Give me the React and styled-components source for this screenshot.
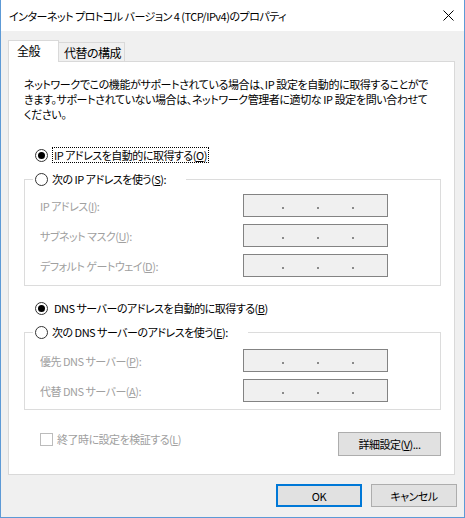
import React from 'react'
import styled, { createGlobalStyle, css } from 'styled-components'

const GlobalStyle = createGlobalStyle`
    html, body {
        margin: 0;
        padding: 0;
        background: #fff;
    }

    body {
        font-family: "Noto Sans CJK JP", "Noto Sans", sans-serif;
        font-size: 11px;
        letter-spacing: -0.5px;
        font-feature-settings: "palt" 1;
        color: #000;
    }

    * {
        box-sizing: border-box;
    }
`

const Window = styled.div`
    display: flex;
    flex-direction: column;
    width: 465px;
    height: 518px;
    border: 1px solid #5d9ad6;
    border-top: 0;
`

const TitleBar = styled.div`
    display: flex;
    align-items: center;
    justify-content: space-between;
    height: 31px;
    padding: 0 10px 0 8px;
    background: #fff;
`

const Title = styled.span`
    line-height: 16px;
`

const Body = styled.div`
    flex: 1;
    display: flex;
    flex-direction: column;
    padding: 9px 7px 10px 7px;
    background: #f0f0f0;
`

const TabList = styled.div`
    display: flex;
    align-items: flex-end;
    height: 21px;
`

const Tab = styled.div`
    display: flex;
    align-items: center;
    font-size: 12px;
    border: 1px solid #d9d9d9;

    ${props => props.$active ? css`
        position: relative;
        z-index: 1;
        width: 51px;
        height: 22px;
        margin-bottom: -1px;
        padding: 0 0 3px 8px;
        border-bottom: 0;
        background: #fff;
    ` : css`
        width: 66px;
        height: 19px;
        padding: 1px 0 0 5px;
        border-left: 0;
        border-bottom: 0;
        background: #f0f0f0;
    `}
`

const Panel = styled.div`
    flex: 1;
    display: flex;
    flex-direction: column;
    margin-right: 2px;
    padding: 15px 13px 0 15px;
    border: 1px solid #d9d9d9;
    background: #fff;
`

const Intro = styled.p`
    margin: 0;
    line-height: 15px;
    letter-spacing: -0.4px;
    white-space: nowrap;
`

const RadioRow = styled.label`
    display: flex;
    align-items: center;
    gap: 4px;
    height: 16px;
    margin: ${props => props.$top || 0}px 0 0 11px;
`

const Radio = styled.span`
    position: relative;
    flex: none;
    width: 13px;
    height: 13px;
    border: 1px solid #333;
    border-radius: 50%;
    background: #fff;

    ${props => props.$checked && css`
        &::after {
            content: '';
            position: absolute;
            top: 2px;
            left: 2px;
            width: 7px;
            height: 7px;
            border-radius: 50%;
            background: #000;
        }
    `}
`

const RadioText = styled.span`
    line-height: 14px;
    padding: 0 1px;
    border: 1px dotted ${props => props.$focused ? '#000' : 'transparent'};
`

const Group = styled.fieldset`
    display: flex;
    flex-direction: column;
    gap: 7px;
    width: 417px;
    min-width: 0;
    margin: 8px 0 0;
    padding: ${props => props.$top}px 0 ${props => props.$bottom}px 8px;
    border: 1px solid #dcdcdc;
`

const Legend = styled.legend`
    display: flex;
    align-items: center;
    gap: 4px;
    height: 16px;
    padding: 0 ${props => props.$tail}px 0 2px;
`

const FieldRow = styled.div`
    display: flex;
    align-items: center;
    height: 23px;
`

const FieldLabel = styled.span`
    width: 203px;
    margin-left: 7px;
    color: #a0a0a0;
`

const IpBox = styled.div`
    display: flex;
    align-items: center;
    gap: 33px;
    width: 145px;
    height: 23px;
    padding: 5px 0 0 38px;
    border: 1px solid #838383;
    background: #f0f0f0;
`

const Dot = styled.span`
    width: 2px;
    height: 2px;
    background: #8a8a8a;
`

const BottomRow = styled.div`
    display: flex;
    align-items: flex-start;
    justify-content: space-between;
    width: 417px;
    margin-top: 22px;
    padding-left: 16px;
`

const CheckLabel = styled.label`
    display: flex;
    align-items: center;
    gap: 4px;
    color: #a0a0a0;
    line-height: 14px;
`

const CheckBox = styled.span`
    width: 13px;
    height: 13px;
    border: 1px solid #bcbcbc;
    background: #fff;
`

const Button = styled.button`
    width: ${props => props.$width}px;
    height: ${props => props.$height}px;
    padding: 0;
    font: inherit;
    letter-spacing: inherit;
    color: #000;
    background: #e1e1e1;
    border: ${props => props.$default ? '2px solid #0078d7' : '1px solid #adadad'};
`

const Footer = styled.div`
    display: flex;
    justify-content: flex-end;
    gap: 9px;
    margin-top: 9px;
`

const IpField = ({ label }) => (
    <FieldRow>
        <FieldLabel>{label}</FieldLabel>
        <IpBox>
            <Dot />
            <Dot />
            <Dot />
        </IpBox>
    </FieldRow>
)

const CloseIcon = () => (
    <svg width="11" height="11" viewBox="0 0 11 11">
        <path d="M0.5 0.5 L10.5 10.5 M10.5 0.5 L0.5 10.5" stroke="#000" strokeWidth="1" fill="none" />
    </svg>
)

const App = () => (
    <>
        <GlobalStyle />
        <Window>
            <TitleBar>
                <Title>インターネット プロトコル バージョン 4 (TCP/IPv4)のプロパティ</Title>
                <CloseIcon />
            </TitleBar>

            <Body>
                <TabList>
                    <Tab $active>全般</Tab>
                    <Tab>代替の構成</Tab>
                </TabList>

                <Panel>
                    <Intro>
                        ネットワークでこの機能がサポートされている場合は、IP 設定を自動的に取得することがで<br />
                        きます。サポートされていない場合は、ネットワーク管理者に適切な IP 設定を問い合わせて<br />
                        ください。
                    </Intro>

                    <RadioRow $top={25}>
                        <Radio $checked />
                        <RadioText $focused>IP アドレスを自動的に取得する(<u>O</u>)</RadioText>
                    </RadioRow>

                    <Group $top={7} $bottom={8}>
                        <Legend $tail={20}>
                            <Radio />
                            <span>次の IP アドレスを使う(<u>S</u>):</span>
                        </Legend>
                        <IpField label={<>IP アドレス(<u>I</u>):</>} />
                        <IpField label={<>サブネット マスク(<u>U</u>):</>} />
                        <IpField label={<>デフォルト ゲートウェイ(<u>D</u>):</>} />
                    </Group>

                    <RadioRow $top={14}>
                        <Radio $checked />
                        <RadioText>DNS サーバーのアドレスを自動的に取得する(<u>B</u>)</RadioText>
                    </RadioRow>

                    <Group $top={9} $bottom={7}>
                        <Legend $tail={20}>
                            <Radio />
                            <span>次の DNS サーバーのアドレスを使う(<u>E</u>):</span>
                        </Legend>
                        <IpField label={<>優先 DNS サーバー(<u>P</u>):</>} />
                        <IpField label={<>代替 DNS サーバー(<u>A</u>):</>} />
                    </Group>

                    <BottomRow>
                        <CheckLabel>
                            <CheckBox />
                            <span>終了時に設定を検証する(<u>L</u>)</span>
                        </CheckLabel>
                        <Button $width={103} $height={24}>詳細設定(<u>V</u>)...</Button>
                    </BottomRow>
                </Panel>

                <Footer>
                    <Button $width={86} $height={23} $default>OK</Button>
                    <Button $width={86} $height={23}>キャンセル</Button>
                </Footer>
            </Body>
        </Window>
    </>
)

export default App
